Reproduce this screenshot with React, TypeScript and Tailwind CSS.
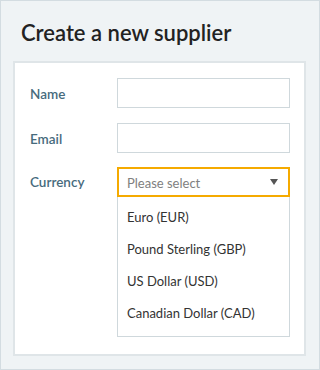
import React from 'react';

const currencies = ['Euro (EUR)', 'Pound Sterling (GBP)', 'US Dollar (USD)', 'Canadian Dollar (CAD)'];

const Row: React.FC<{ label: string; children: React.ReactNode }> = ({ label, children }) => (
  <div className="flex items-center">
    <span className="w-[87px] pt-[2px] text-[13.5px] font-semibold text-[#476b7d]">{label}</span>
    {children}
  </div>
);

const App: React.FC = () => {
  return (
    <div
      className="w-[320px] h-[370px] border border-[#d3dce1] bg-[#eff3f5] px-[12px] overflow-hidden"
      style={{ fontFamily: 'Lato, "Open Sans", sans-serif' }}
    >
      <h1 className="pt-[19px] pl-[8px] text-[22px] leading-[26px] font-semibold text-[#222]">Create a new supplier</h1>

      <div className="mt-[15px] w-[293px] border-2 border-[#dfe5e8] bg-white pl-[15px] pr-[14px] pt-[15px] pb-[17px]">
        <div className="flex flex-col">
          <Row label="Name">
            <div className="w-[173px] h-[30px] border border-[#cfd8dc]" />
          </Row>
          <div className="mt-[15px]">
            <Row label="Email">
              <div className="w-[173px] h-[30px] border border-[#cfd8dc]" />
            </Row>
          </div>
          <div className="mt-[14px] flex items-start">
            <span className="w-[87px] h-[30px] flex items-center text-[13.5px] font-semibold text-[#476b7d]">Currency</span>
            <div className="w-[173px]">
              <div className="h-[30px] border-2 border-[#f5aa00] flex items-center justify-between pl-[8px] pr-[10px]">
                <span className="pt-[4px] text-[13px] text-[#808080]">Please select</span>
                <svg width="8" height="6" viewBox="0 0 8 6">
                  <path d="M0 0 L8 0 L4 6 Z" fill="#555" />
                </svg>
              </div>
              <ul className="border border-t-0 border-[#cfd8dc] pt-[5px] pb-[6px]">
                {currencies.map((c) => (
                  <li key={c} className="h-8 flex items-center pl-[9px] text-[13px] text-[#333]">
                    {c}
                  </li>
                ))}
              </ul>
            </div>
          </div>
        </div>
      </div>
    </div>
  );
};

export default App;
